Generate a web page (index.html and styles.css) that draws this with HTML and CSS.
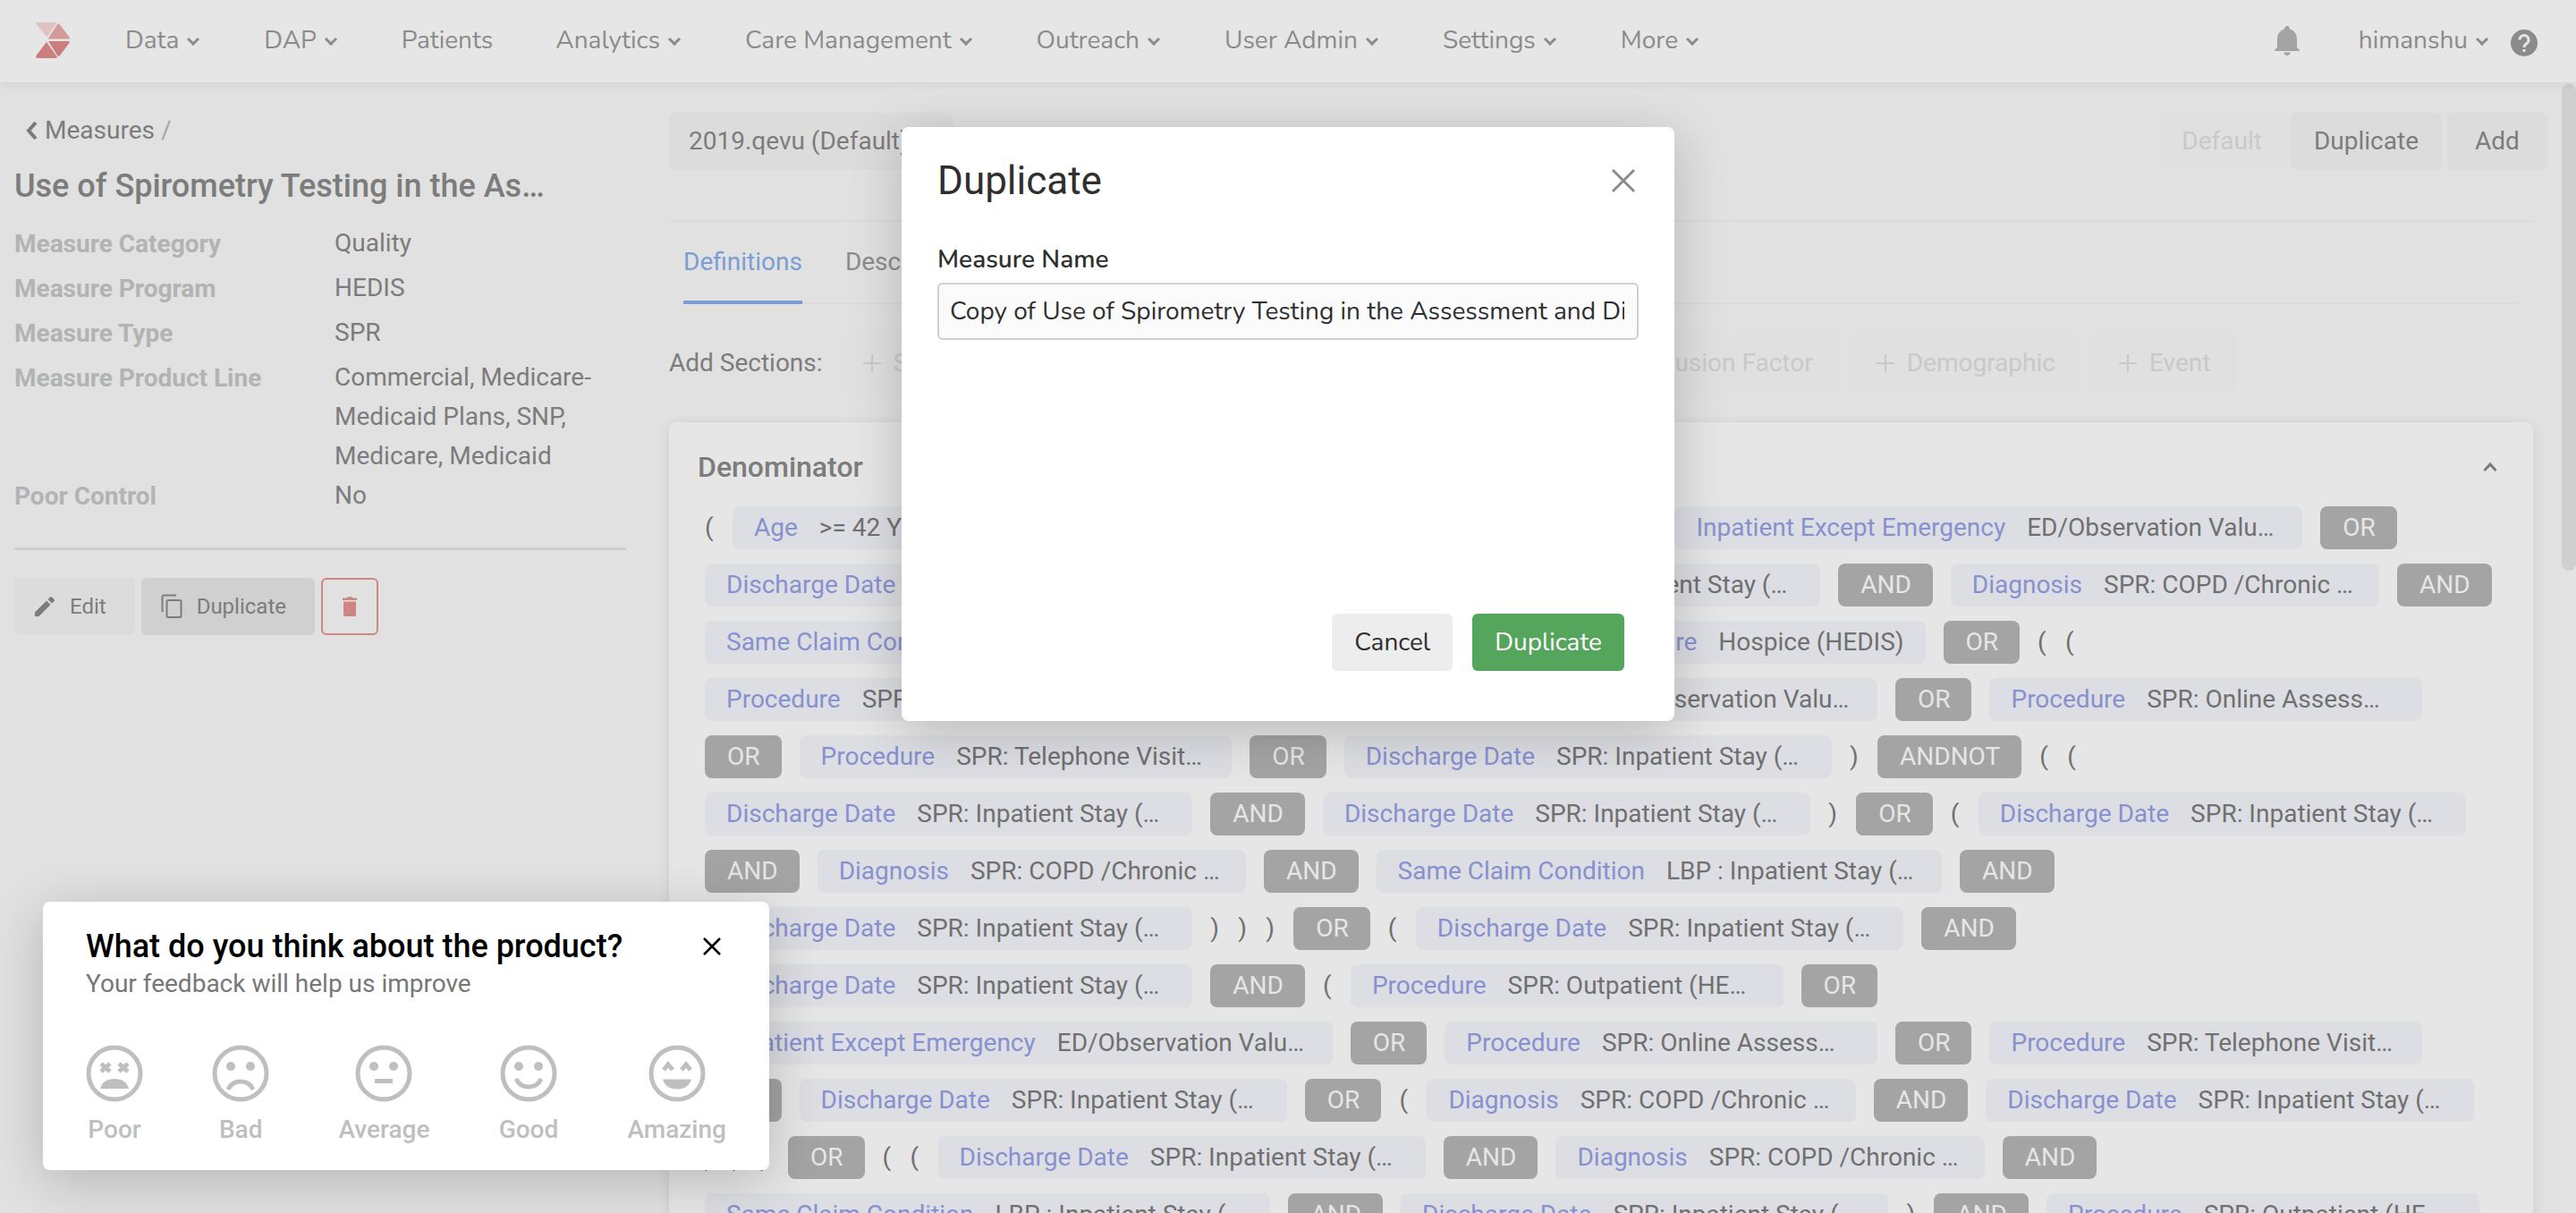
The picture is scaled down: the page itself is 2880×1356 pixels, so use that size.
FILE: index.html
```html
<!DOCTYPE html>
<html lang="en">
<head>
<meta charset="utf-8">
<title>Measures</title>
<link rel="stylesheet" href="styles.css">
</head>
<body>
<header class="topbar">
  <a class="logo" href="#" aria-label="Home">
    <svg width="38" height="40" viewBox="0 0 38 40"><path fill="#dfc3c3" d="M1.500 0H22q2 0 1 1.500L12.500 16.500 .5 2Q-.5 0 1.500 0z"/><path fill="#d29a98" d="M24 2.500q1.500-2 3 0l10.500 14q1 2-.5 2H13.500z"/><path fill="#cb7f7c" d="M14 21h23q1.500 0 .5 2L27 37q-1.500 2-3 0z"/><path fill="#cb7f7c" d="M12 22l11.500 16q1 2-1 2H2q-2.500 0-1.500-3z"/></svg>
  </a>
  <nav class="menu">
    <a href="#">Data<i class="chev"></i></a>
    <a href="#">DAP<i class="chev"></i></a>
    <a href="#">Patients</a>
    <a href="#">Analytics<i class="chev"></i></a>
    <a href="#">Care Management<i class="chev"></i></a>
    <a href="#">Outreach<i class="chev"></i></a>
    <a href="#">User Admin<i class="chev"></i></a>
    <a href="#">Settings<i class="chev"></i></a>
    <a href="#">More<i class="chev"></i></a>
  </nav>
  <div class="account">
    <button class="plain" aria-label="Notifications"><svg width="28" height="34" viewBox="0 0 28 34"><path fill="#a3a3a3" d="M14 1c2 0 3 1.500 3 3.500 5 1.500 8 5.500 8 11V25l3 3v1H0v-1l3-3v-9.500C3 10 6 6 11 4.500 11 2.500 12 1 14 1zM10.500 30.500h7a3.500 3.500 0 0 1-7 0z"/></svg></button>
    <a class="user" href="#">himanshu<i class="chev"></i></a>
    <button class="plain" aria-label="Help"><svg width="32" height="38" viewBox="0 0 32 38"><circle cx="16" cy="22" r="15" fill="#8b8b8b"/><path d="M11 18.500a5 5 0 1 1 8 4q-3 2-3 4.500" fill="none" stroke="#e6e6e6" stroke-width="3"/><rect x="14.500" y="29" width="3" height="3" fill="#e6e6e6"/></svg></button>
  </div>
</header>

<div class="page">
  <aside class="side">
    <a class="back" href="#"><svg width="14" height="22" viewBox="0 0 14 22"><path d="M12 2L4 11l8 9" fill="none" stroke="#7a7a7a" stroke-width="4"/></svg><span>Measures <span class="slash">/</span></span></a>
    <h1>Use of Spirometry Testing in the As…</h1>
    <dl class="facts">
      <dt>Measure Category</dt><dd>Quality</dd>
      <dt>Measure Program</dt><dd>HEDIS</dd>
      <dt>Measure Type</dt><dd>SPR</dd>
      <dt>Measure Product Line</dt><dd>Commercial, Medicare-Medicaid Plans, SNP, Medicare, Medicaid</dd>
      <dt>Poor Control</dt><dd>No</dd>
    </dl>
    <div class="actions">
      <button class="act"><svg width="24" height="24" viewBox="0 0 24 24"><path fill="#7c7c7c" d="M1 18.500L14 5.500l4.500 4.500L5.500 23H1zM15.500 4l2.500-2.500q1-1 2 0L22.500 4q1 1 0 2L20 8.500z"/></svg>Edit</button>
      <button class="act act-dark"><svg width="24" height="28" viewBox="0 0 24 28"><path fill="none" stroke="#7c7c7c" stroke-width="2" d="M1.500 20V3q0-1.500 1.500-1.500h14M8 7h13q1.500 0 1.500 1.500v16q0 1.500-1.500 1.500H8q-1.500 0-1.500-1.500v-16Q6.500 7 8 7z"/></svg>Duplicate</button>
      <button class="act act-delete" aria-label="Delete"><svg width="18" height="22" viewBox="0 0 18 22"><path fill="#cd8683" d="M1 1.500h4.500L7 0h4l1.500 1.500H17V4H1zM2 5.500h14V20q0 2-2 2H4q-2 0-2-2z"/></svg></button>
    </div>
  </aside>

  <main class="main">
    <div class="bar">
      <button class="btn version">2019.qevu (Default)</button>
      <div class="bar-actions">
        <button class="btn btn-off" disabled>Default</button>
        <button class="btn">Duplicate</button>
        <button class="btn">Add</button>
      </div>
    </div>
    <nav class="tabs">
      <a class="on" href="#">Definitions</a>
      <a href="#">Description</a>
    </nav>
    <div class="sections">
      <span>Add Sections:</span>
      <button class="add" disabled><i class="plus"></i>Stratification</button>
      <button class="add" disabled><i class="plus"></i>Denominator</button>
      <button class="add" disabled><i class="plus"></i>Inclusion Event</button>
      <button class="add" disabled><i class="plus"></i>Exclusion Factor</button>
      <button class="add" disabled><i class="plus"></i>Demographic</button>
      <button class="add" disabled><i class="plus"></i>Event</button>
    </div>
    <section class="card">
      <div class="card-head"><h2>Denominator</h2><button class="plain" aria-label="Collapse"><svg width="16" height="12" viewBox="0 0 16 12"><path d="M1.500 10L8 3l6.500 7" fill="none" stroke="#7a7a7a" stroke-width="3"/></svg></button></div>
      <div class="rule">
        <span class="par">(</span><span class="chip"><b>Age</b><span>&gt;= 42 Years</span></span><span class="op">AND</span><span class="par">(</span><span class="par">(</span><span class="chip"><b>Result</b><span class="cut">SPR: Outpatient (HE…</span></span><span class="op">AND</span>
        <span class="chip"><b>Inpatient Except Emergency</b><span class="cut">ED/Observation Valu…</span></span><span class="op">OR</span>

        <span class="chip"><b>Discharge Date</b><span class="cut">SPR: Inpatient Stay (…</span></span><span class="op">OR</span><span class="par">(</span><span class="chip"><b>Discharge Date</b><span class="cut">SPR: Inpatient Stay (…</span></span><span class="op">AND</span><span class="chip"><b>Diagnosis</b><span class="cut">SPR: COPD /Chronic …</span></span><span class="op">AND</span>

        <span class="chip"><b>Same Claim Condition</b><span class="cut">LBP : Inpatient Stay (…</span></span><span class="par">)</span><span class="par">)</span><span class="par">)</span><span class="op">ANDNOT</span><span class="par">(</span><span class="chip"><b>Procedure</b><span>Hospice (HEDIS)</span></span><span class="op">OR</span><span class="par">(</span><span class="par">(</span>

        <span class="chip"><b>Procedure</b><span class="cut">SPR: Outpatient (HE…</span></span><span class="op">OR</span><span class="chip"><b>Inpatient Except Emergency</b><span class="cut">ED/Observation Valu…</span></span><span class="op">OR</span><span class="chip"><b>Procedure</b><span class="cut">SPR: Online Assess…</span></span>

        <span class="op">OR</span><span class="chip"><b>Procedure</b><span class="cut">SPR: Telephone Visit…</span></span><span class="op">OR</span><span class="chip"><b>Discharge Date</b><span class="cut">SPR: Inpatient Stay (…</span></span><span class="par">)</span><span class="op">ANDNOT</span><span class="par">(</span><span class="par">(</span>

        <span class="chip"><b>Discharge Date</b><span class="cut">SPR: Inpatient Stay (…</span></span><span class="op">AND</span><span class="chip"><b>Discharge Date</b><span class="cut">SPR: Inpatient Stay (…</span></span><span class="par">)</span><span class="op">OR</span><span class="par">(</span><span class="chip"><b>Discharge Date</b><span class="cut">SPR: Inpatient Stay (…</span></span>

        <span class="op">AND</span><span class="chip"><b>Diagnosis</b><span class="cut">SPR: COPD /Chronic …</span></span><span class="op">AND</span><span class="chip"><b>Same Claim Condition</b><span class="cut">LBP : Inpatient Stay (…</span></span><span class="op">AND</span>

        <span class="chip"><b>Discharge Date</b><span class="cut">SPR: Inpatient Stay (…</span></span><span class="par">)</span><span class="par">)</span><span class="par">)</span><span class="op">OR</span><span class="par">(</span><span class="chip"><b>Discharge Date</b><span class="cut">SPR: Inpatient Stay (…</span></span><span class="op">AND</span>

        <span class="chip"><b>Discharge Date</b><span class="cut">SPR: Inpatient Stay (…</span></span><span class="op">AND</span><span class="par">(</span><span class="chip"><b>Procedure</b><span class="cut">SPR: Outpatient (HE…</span></span><span class="op">OR</span>

        <span class="chip"><b>Inpatient Except Emergency</b><span class="cut">ED/Observation Valu…</span></span><span class="op">OR</span><span class="chip"><b>Procedure</b><span class="cut">SPR: Online Assess…</span></span><span class="op">OR</span><span class="chip"><b>Procedure</b><span class="cut">SPR: Telephone Visit…</span></span>

        <span class="op">OR</span><span class="chip"><b>Discharge Date</b><span class="cut">SPR: Inpatient Stay (…</span></span><span class="op">OR</span><span class="par">(</span><span class="chip"><b>Diagnosis</b><span class="cut">SPR: COPD /Chronic …</span></span><span class="op">AND</span><span class="chip"><b>Discharge Date</b><span class="cut">SPR: Inpatient Stay (…</span></span>

        <span class="par">)</span><span class="par">)</span><span class="par">)</span><span class="op">OR</span><span class="par">(</span><span class="par">(</span><span class="chip"><b>Discharge Date</b><span class="cut">SPR: Inpatient Stay (…</span></span><span class="op">AND</span><span class="chip"><b>Diagnosis</b><span class="cut">SPR: COPD /Chronic …</span></span><span class="op">AND</span>

        <span class="chip"><b>Same Claim Condition</b><span class="cut">LBP : Inpatient Stay (…</span></span><span class="op">AND</span><span class="chip"><b>Discharge Date</b><span class="cut">SPR: Inpatient Stay (…</span></span><span class="par">)</span><span class="op">AND</span><span class="chip"><b>Procedure</b><span class="cut">SPR: Outpatient (HE…</span></span>
      </div>
    </section>
  </main>
  <div class="scroll"><div class="thumb"></div></div>
</div>

<div class="modal" role="dialog" aria-labelledby="modal-title">
  <div class="modal-head">
    <h2 id="modal-title">Duplicate</h2>
    <button class="plain" aria-label="Close"><svg width="28" height="28" viewBox="0 0 28 28"><path d="M2 2l24 24M26 2L2 26" stroke="#8b8b8b" stroke-width="3"/></svg></button>
  </div>
  <label for="measure-name">Measure Name</label>
  <input id="measure-name" type="text" value="Copy of Use of Spirometry Testing in the Assessment and Diagnosis of COPD">
  <div class="modal-foot">
    <button class="mbtn">Cancel</button>
    <button class="mbtn mbtn-go">Duplicate</button>
  </div>
</div>

<div class="feedback" role="dialog" aria-labelledby="feedback-title">
  <div class="feedback-head">
    <h2 id="feedback-title">What do you think about the product?</h2>
    <button class="plain" aria-label="Close"><svg width="22" height="22" viewBox="0 0 22 22"><path d="M2 2l18 18M20 2L2 20" stroke="#000" stroke-width="2.500"/></svg></button>
  </div>
  <p>Your feedback will help us improve</p>
  <div class="faces">
    <button class="face"><svg viewBox="0 0 64 64"><circle cx="32" cy="32" r="29"/><path d="M17 21l10 9M27 21l-10 9M37 21l10 9M47 21l-10 9"/><path class="fill" d="M16 49q3-11 16-11t16 11z"/></svg>Poor</button>
    <button class="face"><svg viewBox="0 0 64 64"><circle cx="32" cy="32" r="29"/><circle class="fill" cx="21" cy="24" r="5"/><circle class="fill" cx="43" cy="24" r="5"/><path d="M18 50q4-9 14-9t14 9"/></svg>Bad</button>
    <button class="face"><svg viewBox="0 0 64 64"><circle cx="32" cy="32" r="29"/><circle class="fill" cx="21" cy="24" r="5"/><circle class="fill" cx="43" cy="24" r="5"/><path d="M22 40.500h20"/></svg>Average</button>
    <button class="face"><svg viewBox="0 0 64 64"><circle cx="32" cy="32" r="29"/><circle class="fill" cx="21" cy="24" r="5"/><circle class="fill" cx="43" cy="24" r="5"/><path d="M18 38q4 9 14 9t14-9"/></svg>Good</button>
    <button class="face"><svg viewBox="0 0 64 64"><circle cx="32" cy="32" r="29"/><path d="M17 28l5-6 5 6M37 28l5-6 5 6"/><path class="fill" d="M16 38.500h32q-3 11-16 11t-16-11z"/></svg>Amazing</button>
  </div>
</div>
</body>
</html>
```
FILE: styles.css
```css
* { box-sizing: border-box; }
body {
  margin: 0;
  height: 100vh;
  overflow: hidden;
  display: flex;
  flex-direction: column;
  background: #e1e1e1;
  color: #7c7c7c;
  font: 28px/44px Roboto, "Liberation Sans", sans-serif;
}
a { color: inherit; text-decoration: none; }
button { font: inherit; color: inherit; border: 0; padding: 0; white-space: nowrap; }
h1, h2, p, dl, dd { margin: 0; font-weight: 500; }
svg { display: block; flex: none; }
.plain { background: none; }

.topbar {
  position: relative;
  flex: none;
  height: 92px;
  display: flex;
  align-items: center;
  padding: 0 42px 2px 40px;
  background: #e6e6e6;
  box-shadow: 0 2px 10px rgba(0, 0, 0, .08);
  color: #8b8b8b;
  font-family: Nunito, Lato, "Open Sans", sans-serif;
}
.logo { margin-right: 62px; }
.menu { display: flex; gap: 70px; white-space: nowrap; }
.chev {
  display: inline-block;
  width: 10px;
  height: 10px;
  margin: 0 4px 5px 11px;
  border: solid currentColor;
  border-width: 0 3px 3px 0;
  transform: rotate(45deg);
}
.account { margin-left: auto; display: flex; align-items: center; }
.user { margin: 0 22px 0 66px; }

.page { flex: 1; min-height: 0; display: flex; }
.side { flex: none; width: 700px; padding: 32px 0 0 16px; }
.back { display: flex; align-items: center; gap: 8px; padding-left: 12px; }
.slash { color: #a5a5a5; }
.side h1 { margin: 16px 0 18px; font-size: 36px; line-height: 48px; }
.facts { display: grid; grid-template-columns: 358px 1fr; grid-auto-rows: minmax(50px, auto); padding-bottom: 30px; border-bottom: 3px solid #cfcfcf; }
.facts dt { padding-top: 2px; line-height: 42px; font-weight: 700; color: #b2b3b3; }
.facts dd { font-weight: 400; }
.actions { display: flex; gap: 7px; margin-top: 31px; font-size: 24px; }
.act { height: 64px; padding: 0 32px 0 22px; display: flex; align-items: center; gap: 16px; border-radius: 6px; background: #dcdcdc; }
.act-dark { background: #d0d0d0; }
.act-delete { width: 64px; padding: 0; justify-content: center; background: none; border: 2px solid #cd8683; }

.main { flex: 1; min-width: 0; padding: 34px 32px 0 48px; }
.bar { display: flex; justify-content: space-between; height: 120px; margin-right: -16px; }
.bar-actions { display: flex; gap: 6px; }
.btn { height: 64px; padding: 0 26px; border-radius: 6px; background: #dcdcdc; }
.version { width: 318px; padding: 0 22px; text-align: left; }
.bar-actions .btn { min-width: 112px; }
.btn-off { background: #e0e0e0; color: #c9c9c9; }
.tabs { display: flex; gap: 48px; position: relative; height: 94px; padding: 0 16px; border-top: 2px solid #dbdbdb; }
.tabs::after { content: ""; position: absolute; left: 16px; right: 16px; bottom: 0; height: 2px; background: #dbdbdb; }
.tabs a { padding-top: 23px; color: #8b8b8b; }
.tabs .on { z-index: 1; border-bottom: 4px solid #7a9dd3; color: #7a9dd3; }
.sections { display: flex; align-items: center; gap: 14px; margin: 32px 0; white-space: nowrap; }
.sections span { margin-right: 2px; }
.add { height: 68px; padding: 0 28px 0 29px; display: flex; align-items: center; gap: 14px; border-radius: 6px; background: #e0e0e0; color: #c9c9c9; }
.plus { width: 20px; height: 20px; background: linear-gradient(#c9c9c9, #c9c9c9) center / 20px 2px no-repeat, linear-gradient(#c9c9c9, #c9c9c9) center / 2px 20px no-repeat; }
.card { padding: 28px 32px 40px; border-radius: 8px; background: #e6e6e6; box-shadow: 0 2px 14px rgba(0, 0, 0, .09); }
.card-head { display: flex; justify-content: space-between; padding-right: 8px; }
.card h2 { font-size: 32px; }
.rule { display: flex; flex-wrap: wrap; gap: 16px 20px; margin: 22px 8px 0; line-height: 48px; white-space: nowrap; color: #707070; }
.chip { display: flex; gap: 24px; padding: 0 24px; border-radius: 8px; background: #dddee3; }
.chip b { font-weight: 400; color: #8791cf; }
.cut { width: 284px; }
.op { padding: 0 24px 0 25px; border-radius: 8px; background: #a4a4a4; color: #e6e6e6; }
.par { width: 11px; }

.scroll { flex: none; width: 16px; background: #e3e3e3; }
.thumb { height: 43%; margin-top: 2px; border-radius: 8px; background: #cfcfcf; }

.modal {
  position: absolute;
  top: 142px;
  left: calc(50% - 432px);
  width: 864px;
  height: 664px;
  display: flex;
  flex-direction: column;
  padding: 36px 40px 56px;
  border-radius: 8px;
  background: #fff;
  box-shadow: 0 12px 60px rgba(0, 0, 0, .2);
  color: #2f2f2f;
  font-family: Nunito, Lato, "Open Sans", sans-serif;
}
.modal-head { display: flex; align-items: center; justify-content: space-between; padding-right: 3px; }
.modal h2 { font: 400 44px/48px Roboto, sans-serif; }
.modal label { margin-top: 42px; font-weight: 600; }
.modal input { height: 64px; margin-top: 4px; padding: 0 14px 0 12px; border: 2px solid #d0d0d0; border-radius: 6px; background: #fbfbfb; color: inherit; font: inherit; }
.modal-foot { display: flex; justify-content: flex-end; gap: 22px; margin-top: auto; padding-right: 16px; }
.mbtn { height: 64px; padding: 0 25px; border-radius: 6px; background: #ededed; }
.mbtn-go { background: #56a55d; color: #fff; }

.feedback {
  position: absolute;
  left: 48px;
  bottom: 48px;
  width: 812px;
  height: 300px;
  padding: 28px 48px;
  border-radius: 8px;
  background: #fff;
  box-shadow: 0 12px 60px rgba(0, 0, 0, .2);
  color: #777;
}
.feedback-head { display: flex; align-items: center; justify-content: space-between; padding-right: 5px; }
.feedback h2 { font-size: 36px; color: #000; }
.feedback p { line-height: 40px; font-weight: 400; }
.faces { display: flex; justify-content: space-between; margin-top: 48px; }
.face { display: flex; flex-direction: column; align-items: center; gap: 9px; background: none; color: #bec0bf; font-weight: 500; }
.face svg { width: 64px; height: 64px; fill: none; stroke: #bec0bf; stroke-width: 5; }
.face .fill { fill: #bec0bf; stroke: none; }
```
